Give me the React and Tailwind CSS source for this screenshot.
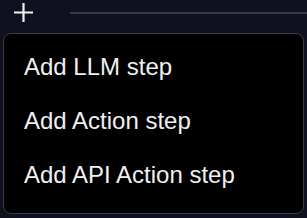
const ITEMS = ["Add LLM step", "Add Action step", "Add API Action step"];

export default function App() {
  return (
    <div
      className="w-[307px] h-[218px] bg-[#10111f] overflow-hidden"
      style={{ fontFamily: '"Liberation Sans", Arial, sans-serif' }}
    >
      <div className="flex items-start h-[33px]">
        <svg
          className="ml-[14px] mt-[3px] shrink-0"
          width="19"
          height="19"
          viewBox="0 0 19 19"
          fill="none"
          stroke="#f2f2f2"
          strokeWidth="2.2"
        >
          <path d="M0 9.5H19M9.5 0V19" />
        </svg>
        <div className="flex-1 ml-[37px] mt-[12px] h-[2px] bg-[#373848]" />
      </div>
      <div className="ml-[3px] w-[301px] h-[181px] rounded-lg border border-[#3b3c48] bg-black pt-[6px] pl-[20px]">
        {ITEMS.map((label) => (
          <div key={label} className="h-[54px] leading-[54px] text-[24px] text-[#f0f0f0]">
            {label}
          </div>
        ))}
      </div>
    </div>
  );
}
